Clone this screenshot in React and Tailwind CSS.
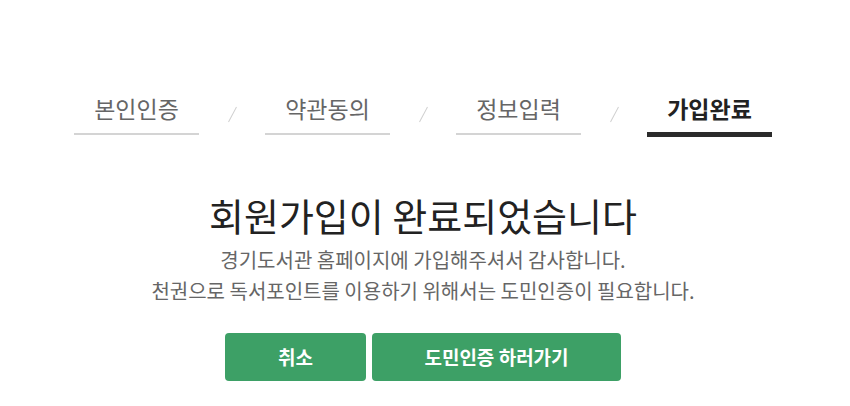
import React from 'react';

const steps = [
    { label: '본인인증', active: false },
    { label: '약관동의', active: false },
    { label: '정보입력', active: false },
    { label: '가입완료', active: true },
];

const App = () => {
    return (
        <div className="w-[850px] h-[406px] bg-white overflow-hidden" style={{ fontFamily: '"Noto Sans CJK KR", "Noto Sans", sans-serif' }}>
            {/* Step indicator */}
            <div className="flex items-start pl-[74px] pt-[93px]">
                {steps.map((s, i) => (
                    <React.Fragment key={s.label}>
                        {i > 0 && (
                            <div className="w-[66px] h-[43px] flex items-center justify-center">
                                <div className="w-px h-[17px] bg-[#d0d0d0] rotate-[28deg]" />
                            </div>
                        )}
                        <div
                            className={
                                s.active
                                    ? 'w-[125px] text-center text-[23px] leading-[30px] font-bold text-[#222] pb-[9px] border-b-[5px] border-[#2b2b2b]'
                                    : 'w-[125px] text-center text-[23px] leading-[30px] text-[#666] pb-[10px] border-b-2 border-[#d4d4d4]'
                            }
                        >
                            {s.label}
                        </div>
                    </React.Fragment>
                ))}
            </div>

            {/* Message */}
            <div className="flex flex-col items-center mt-[53px] pr-[4px]">
                <h1 className="text-[38px] leading-[50px] text-[#222] font-normal">회원가입이 완료되었습니다</h1>
                <p className="text-[20px] leading-[31px] text-[#666] text-center mt-[4px]">
                    경기도서관 홈페이지에 가입해주셔서 감사합니다.<br />
                    천권으로 독서포인트를 이용하기 위해서는 도민인증이 필요합니다.
                </p>
                <div className="flex gap-[6px] mt-[27px]">
                    <button className="w-[141px] h-[48px] rounded bg-[#3da066] text-white font-bold text-[19px]">취소</button>
                    <button className="w-[249px] h-[48px] rounded bg-[#3da066] text-white font-bold text-[19px]">도민인증 하러가기</button>
                </div>
            </div>
        </div>
    );
};

export default App;
